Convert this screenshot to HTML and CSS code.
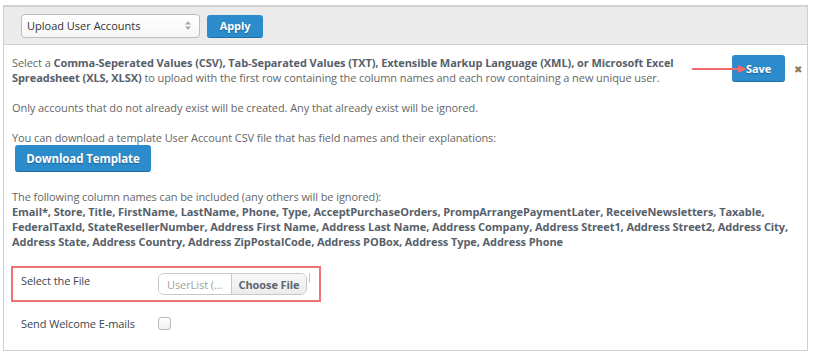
FILE: index.html
```html
<!DOCTYPE html>
<html lang="en">
	<head>
		<meta charset="UTF-8" />
		<meta name="viewport" content="width=device-width, initial-scale=1.0" />
		<title>Upload User Accounts</title>
		<link rel="stylesheet" href="styles.css">
	</head>
	<body>
		<div class="panel">
			<div class="toolbar">
				<div class="select">
					<span>Upload User Accounts</span>
					<svg class="caret" width="6" height="9" viewBox="0 0 6 9">
						<path d="M0 3.5 L3 0 L6 3.5 Z M0 5.5 L3 9 L6 5.5 Z" fill="#aaa" />
					</svg>
				</div>
				<button class="btn btn-apply">Apply</button>
			</div>
			<div class="content">
				<div class="intro">
					<p>Select a <strong>Comma-Seperated Values (CSV), Tab-Separated Values (TXT), Extensible Markup Language (XML), or Microsoft Excel Spreadsheet (XLS, XLSX)</strong> to upload with the first row containing the column names and each row containing a new unique user.</p>
					<div class="actions">
						<svg class="arrow" width="56" height="10" viewBox="0 0 56 10">
							<line x1="0" y1="5" x2="48" y2="5" stroke="#f0696b" stroke-width="2.2" stroke-linecap="round" />
							<path d="M46 1 L55 5 L46 9 Z" fill="#f0696b" />
						</svg>
						<button class="btn btn-save">Save</button>
						<span class="close">&#x2716;</span>
					</div>
				</div>
				<p>Only accounts that do not already exist will be created. Any that already exist will be ignored.</p>
				<p class="tight">You can download a template User Account CSV file that has field names and their explanations:</p>
				<button class="btn btn-download">Download Template</button>
				<p>The following column names can be included (any others will be ignored):<br>
					<strong>Email*, Store, Title, FirstName, LastName, Phone, Type, AcceptPurchaseOrders, PrompArrangePaymentLater, ReceiveNewsletters, Taxable, FederalTaxId, StateResellerNumber, Address First Name, Address Last Name, Address Company, Address Street1, Address Street2, Address City, Address State, Address Country, Address ZipPostalCode, Address POBox, Address Type, Address Phone</strong></p>
				<div class="field field-file">
					<label>Select the File</label>
					<div class="file-input">
						<span class="file-name">UserList (...</span>
						<span class="file-btn">Choose File</span>
					</div>
					<span class="file-edge"></span>
				</div>
				<div class="field field-check">
					<label>Send Welcome E-mails</label>
					<span class="checkbox"></span>
				</div>
			</div>
		</div>
	</body>
</html>
```

FILE: styles.css
```css
body,
html {
	margin: 0px;
	background: #fff;
	font-family: "Open Sans", "Liberation Sans", Arial, sans-serif;
	font-size: 11px;
	letter-spacing: -0.08px;
	color: #666;
}
.panel {
	margin: 5px 12px 0px 3px;
	height: 346px;
	box-sizing: border-box;
	border: 1px solid #cfcfcf;
	border-top: 2px solid #d2d2d2;
	display: flex;
	flex-direction: column;
}
.toolbar {
	background: #ebebeb;
	border-bottom: 1px solid #cfcfcf;
	height: 38px;
	box-sizing: border-box;
	padding: 0px 17px;
	display: flex;
	align-items: center;
	gap: 7px;
}
.select {
	width: 179px;
	height: 24px;
	box-sizing: border-box;
	border: 1px solid #bdbdbd;
	border-radius: 4px;
	background: linear-gradient(#fff, #f6f6f6);
	display: flex;
	align-items: center;
	justify-content: space-between;
	padding: 0px 8px 0px 5px;
	color: #333;
	font-size: 11px;
	letter-spacing: 0px;
}
.btn {
	font-family: inherit;
	font-weight: bold;
	font-size: 11px;
	letter-spacing: -0.1px;
	color: #fff;
	background: #2b8bcb;
	border: none;
	border-bottom: 1px solid #1f6ea6;
	border-radius: 3px;
	text-shadow: 0px 1px 1px rgba(0, 0, 0, 0.3);
	cursor: pointer;
	padding: 0px;
}
.btn-apply {
	width: 56px;
	height: 23px;
	margin-top: 1px;
}
.content {
	padding: 10px 4px 0px 8px;
}
.content p {
	margin: 0px 0px 15px 0px;
	line-height: 15px;
}
.content p.tight {
	margin-bottom: 0px;
}
.content strong {
	color: #56606a;
}
.intro {
	display: flex;
	align-items: flex-start;
}
.intro p {
	flex: 1;
}
.actions {
	position: relative;
	display: flex;
	align-items: center;
	margin: 0px 0px 0px 12px;
	gap: 9px;
}
.arrow {
	position: absolute;
	left: -40px;
	top: 9px;
	z-index: 1;
}
.btn-save {
	width: 53px;
	height: 27px;
}
.close {
	color: #8c7e5c;
	font-size: 10px;
	line-height: 1;
	margin-right: 1px;
}
.btn-download {
	display: block;
	width: 136px;
	height: 27px;
	margin: 0px 0px 17px 3px;
	font-size: 11.5px;
}
.field {
	display: flex;
	align-items: center;
}
.field label {
	width: 137px;
	color: #3a4550;
}
.field-file {
	width: 310px;
	height: 36px;
	box-sizing: border-box;
	border: 2px solid #f07474;
	margin: 17px 0px 0px -1px;
	padding-left: 8px;
}
.field-file label {
	margin-top: -7px;
}
.file-input {
	display: flex;
	height: 22px;
	box-sizing: border-box;
	border: 1px solid #c8c8c8;
	border-radius: 6px;
	overflow: hidden;
	font-size: 11px;
}
.file-name {
	width: 72px;
	color: #a0a0a0;
	padding-left: 8px;
	box-sizing: border-box;
	display: flex;
	align-items: center;
	background: #fff;
}
.file-btn {
	width: 74px;
	border-left: 1px solid #c8c8c8;
	background: linear-gradient(#f7f7f7, #ececec);
	color: #5b6670;
	font-weight: bold;
	display: flex;
	align-items: center;
	justify-content: center;
}
.file-edge {
	width: 1px;
	height: 10px;
	background: #ccc;
	margin: -12px 0px 0px 2px;
}
.field-check {
	margin-top: 14px;
	padding-left: 9px;
}
.checkbox {
	width: 13px;
	height: 13px;
	box-sizing: border-box;
	border: 1px solid #b8b8b8;
	border-radius: 3px;
	background: linear-gradient(#fff, #f0f0f0);
}
```
